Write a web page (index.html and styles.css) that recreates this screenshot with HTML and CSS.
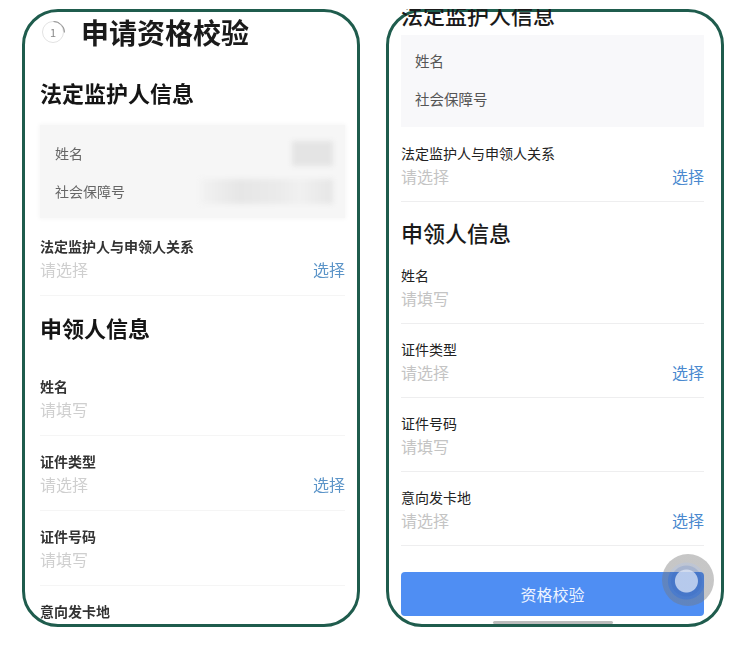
FILE: index.html
```html
<!DOCTYPE html>
<html>

<head>
    <title>申请资格校验</title>
    <link rel="stylesheet" href="styles.css">
</head>

<body>
    <div class="page">
        <!-- left screenshot -->
        <div class="phone">
            <div class="screen screen--left">
                <div class="stepHead">
                    <span class="stepNo">1</span>
                    <h1 class="stepTitle">申请资格校验</h1>
                </div>

                <h2 class="sectionTitle">法定监护人信息</h2>
                <div class="infoBox">
                    <div class="infoRow"><span>姓名</span><i class="masked masked--short"></i></div>
                    <div class="infoRow"><span>社会保障号</span><i class="masked masked--long"></i></div>
                </div>

                <div class="field">
                    <div class="fieldLabel">法定监护人与申领人关系</div>
                    <div class="fieldValue"><span class="placeholder">请选择</span><a href="#" class="pick">选择</a></div>
                </div>

                <h2 class="sectionTitle sectionTitle--second">申领人信息</h2>
                <div class="field">
                    <div class="fieldLabel">姓名</div>
                    <div class="fieldValue"><span class="placeholder">请填写</span></div>
                </div>
                <div class="field">
                    <div class="fieldLabel">证件类型</div>
                    <div class="fieldValue"><span class="placeholder">请选择</span><a href="#" class="pick">选择</a></div>
                </div>
                <div class="field">
                    <div class="fieldLabel">证件号码</div>
                    <div class="fieldValue"><span class="placeholder">请填写</span></div>
                </div>
                <div class="field">
                    <div class="fieldLabel">意向发卡地</div>
                </div>
            </div>
        </div>

        <!-- right screenshot -->
        <div class="phone">
            <div class="screen screen--right">
                <h2 class="sectionTitle sectionTitle--cut">法定监护人信息</h2>
                <div class="infoBox">
                    <div class="infoRow"><span>姓名</span></div>
                    <div class="infoRow"><span>社会保障号</span></div>
                </div>

                <div class="field">
                    <div class="fieldLabel">法定监护人与申领人关系</div>
                    <div class="fieldValue"><span class="placeholder">请选择</span><a href="#" class="pick">选择</a></div>
                </div>

                <h2 class="sectionTitle sectionTitle--second">申领人信息</h2>
                <div class="field">
                    <div class="fieldLabel">姓名</div>
                    <div class="fieldValue"><span class="placeholder">请填写</span></div>
                </div>
                <div class="field">
                    <div class="fieldLabel">证件类型</div>
                    <div class="fieldValue"><span class="placeholder">请选择</span><a href="#" class="pick">选择</a></div>
                </div>
                <div class="field">
                    <div class="fieldLabel">证件号码</div>
                    <div class="fieldValue"><span class="placeholder">请填写</span></div>
                </div>
                <div class="field">
                    <div class="fieldLabel">意向发卡地</div>
                    <div class="fieldValue"><span class="placeholder">请选择</span><a href="#" class="pick">选择</a></div>
                </div>

                <button class="checkButton">资格校验</button>
                <span class="homeBar"></span>
            </div>
            <span class="floatBall"></span>
        </div>
    </div>
</body>

</html>
```

FILE: styles.css
```css
body {
    margin: 0;
    background-color: #fff;
    font-family: "Noto Sans CJK SC", "Noto Sans", sans-serif;
    color: #222;
}

.page {
    display: flex;
    gap: 26px;
    padding: 9px 0 0 22px;
}

.phone {
    position: relative;
    width: 338px;
    height: 618px;
}

/* green frame drawn behind the screenshot */
.phone::before {
    content: "";
    position: absolute;
    inset: 0;
    border: 3px solid #1f5c4d;
    border-radius: 36px;
}

.screen {
    position: relative;
    height: 100%;
    box-sizing: border-box;
    overflow: hidden;
}

.screen--left {
    padding: 0 15px 0 18px;
    filter: blur(0.35px);
}

.screen--right {
    padding: 0 20px 0 15px;
}

/* step header */
.stepHead {
    display: flex;
    align-items: center;
    height: 36px;
    margin-top: 5px;
}

.stepNo {
    position: relative;
    width: 20px;
    height: 20px;
    margin-left: 2px;
    border: 1.5px solid #e2e2e2;
    border-radius: 50%;
    display: flex;
    align-items: center;
    justify-content: center;
    font-size: 11px;
    line-height: 1;
    color: #888;
}

.stepNo::after {
    content: "";
    position: absolute;
    inset: -1.5px;
    border: 1.5px solid transparent;
    border-top-color: #999;
    border-radius: 50%;
    transform: rotate(45deg);
}

.stepTitle {
    margin: 0 0 0 17px;
    font-size: 28px;
    line-height: 36px;
    font-weight: 700;
    color: #1a1a1a;
}

/* section titles */
.sectionTitle {
    margin: 27px 0 0;
    font-size: 22px;
    line-height: 30px;
    font-weight: 700;
    color: #151515;
}

.sectionTitle--second {
    margin: 16px 0 19px;
}

.screen--right .sectionTitle {
    font-weight: 500;
    color: #1a1a1a;
}

.screen--right .sectionTitle--second {
    margin: 15px 0 3px;
}

.screen--right .sectionTitle--cut {
    margin-top: -10px;
}

/* grey info box */
.infoBox {
    display: flex;
    flex-direction: column;
    gap: 18px;
    margin: 18px 0 3px;
    padding: 18px 12px 17px 15px;
    background-color: #f6f6f6;
    box-shadow: 0 0 4px 1px #f6f6f6;
}

.screen--right .infoBox {
    margin: 6px 0 1px;
    padding: 15px 12px 19px 14px;
    background-color: #f8f8fa;
    box-shadow: none;
}

.infoRow {
    display: flex;
    align-items: center;
    justify-content: space-between;
    height: 20px;
    font-size: 14px;
    color: #666;
}

.screen--right .infoRow {
    font-size: 14.5px;
    color: #555;
}

.masked {
    display: block;
    height: 25px;
    filter: blur(2.5px);
}

.masked--short {
    width: 41px;
    background-color: #e4e4e4;
}

.masked--long {
    width: 133px;
    background: linear-gradient(to right, #f2f2f2, #e6e6e6 30%, #ebebeb 60%, #f0f0f0 75%, #e6e6e6);
}

/* form rows */
.field {
    padding: 15px 0 14px;
    border-bottom: 1px solid #f5f5f5;
}

.screen--right .field {
    padding: 15px 0 13px;
    border-bottom-color: #eeeeef;
}

.fieldLabel {
    font-size: 14px;
    line-height: 20px;
    font-weight: 700;
    color: #333;
}

.screen--right .fieldLabel {
    font-weight: 400;
    color: #222;
}

.fieldValue {
    display: flex;
    justify-content: space-between;
    margin-top: 1px;
    font-size: 16px;
    line-height: 24px;
}

.placeholder {
    color: #cfcfcf;
}

.screen--right .placeholder {
    color: #c4c4c4;
}

.pick {
    color: #5b94c8;
    text-decoration: none;
}

.screen--right .pick {
    color: #4a89cf;
}

/* bottom button */
.checkButton {
    display: block;
    width: 100%;
    height: 44px;
    margin-top: 26px;
    border: none;
    border-radius: 4px;
    background-color: #4f8ef3;
    color: #eef4ff;
    font-family: inherit;
    font-size: 16px;
}

.homeBar {
    position: absolute;
    left: 107px;
    bottom: 3px;
    width: 120px;
    height: 3px;
    border-radius: 2px;
    background-color: #bcbcbc;
}

/* assistive touch ball floating over the button */
.floatBall {
    position: absolute;
    left: 276px;
    top: 545px;
    width: 52px;
    height: 52px;
    border-radius: 50%;
    background: radial-gradient(circle at 47% 52%,
            rgba(200, 212, 235, 0.85) 0 11px,
            rgba(60, 90, 150, 0.45) 12px 15px,
            rgba(70, 90, 130, 0.35) 16px 18px,
            rgba(120, 120, 120, 0.42) 19px 26px);
}
```
